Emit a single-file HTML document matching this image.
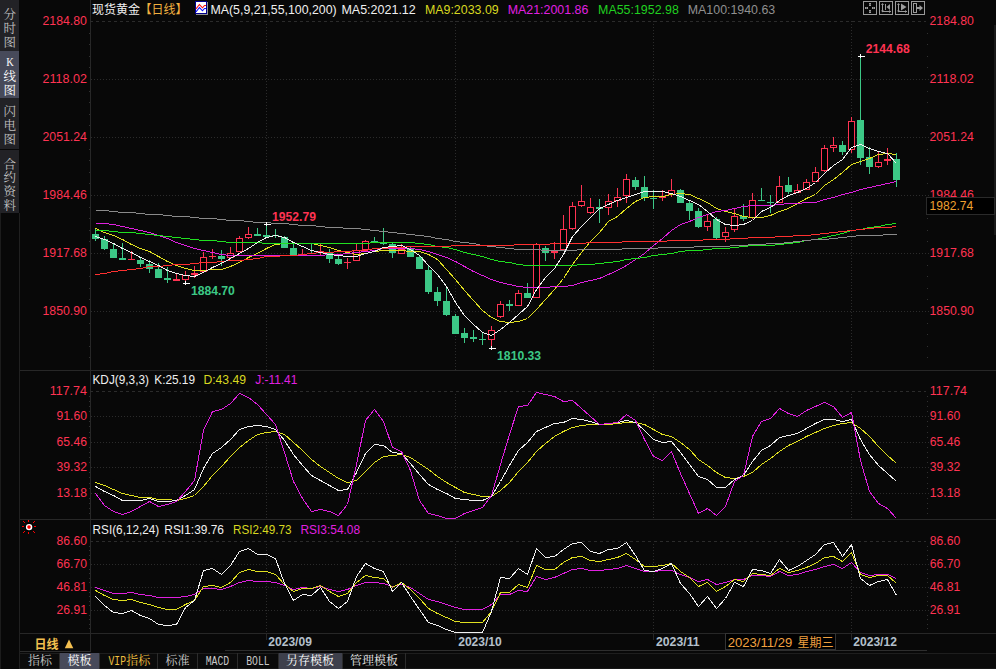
<!DOCTYPE html><html><head><meta charset="utf-8"><title>chart</title><style>html,body{margin:0;padding:0;background:#080808;width:996px;height:669px;overflow:hidden}</style></head><body><svg width="996" height="669" viewBox="0 0 996 669" style="display:block;position:absolute;left:0;top:0">
<rect width="996" height="669" fill="#080808"/>
<g id="sidebar">
<rect x="0" y="0" width="19" height="51" fill="#222226"/>
<text x="9.7" y="18.8" font-family='"Liberation Mono","Noto Serif CJK SC","Noto Sans CJK SC",serif' font-size="12.5" fill="#c0c0c0" text-anchor="middle">分</text>
<text x="9.7" y="32.7" font-family='"Liberation Mono","Noto Serif CJK SC","Noto Sans CJK SC",serif' font-size="12.5" fill="#c0c0c0" text-anchor="middle">时</text>
<text x="9.7" y="46.8" font-family='"Liberation Mono","Noto Serif CJK SC","Noto Sans CJK SC",serif' font-size="12.5" fill="#c0c0c0" text-anchor="middle">图</text>
<rect x="0" y="51" width="19" height="47" fill="#474a5a"/>
<text x="10" y="66.2" font-family='"Liberation Serif",serif' font-size="13" fill="#ffffff" text-anchor="middle" textLength="7.5" lengthAdjust="spacingAndGlyphs">K</text>
<text x="9.7" y="80.5" font-family='"Liberation Mono","Noto Serif CJK SC","Noto Sans CJK SC",serif' font-size="12.5" fill="#ffffff" text-anchor="middle">线</text>
<text x="9.7" y="95.0" font-family='"Liberation Mono","Noto Serif CJK SC","Noto Sans CJK SC",serif' font-size="12.5" fill="#ffffff" text-anchor="middle">图</text>
<rect x="0" y="98" width="19" height="51" fill="#222226"/>
<text x="9.7" y="116.4" font-family='"Liberation Mono","Noto Serif CJK SC","Noto Sans CJK SC",serif' font-size="12.5" fill="#c0c0c0" text-anchor="middle">闪</text>
<text x="9.7" y="130.0" font-family='"Liberation Mono","Noto Serif CJK SC","Noto Sans CJK SC",serif' font-size="12.5" fill="#c0c0c0" text-anchor="middle">电</text>
<text x="9.7" y="143.5" font-family='"Liberation Mono","Noto Serif CJK SC","Noto Sans CJK SC",serif' font-size="12.5" fill="#c0c0c0" text-anchor="middle">图</text>
<rect x="0" y="150" width="19" height="63" fill="#222226"/>
<text x="9.7" y="168.7" font-family='"Liberation Mono","Noto Serif CJK SC","Noto Sans CJK SC",serif' font-size="12.5" fill="#c0c0c0" text-anchor="middle">合</text>
<text x="9.7" y="181.8" font-family='"Liberation Mono","Noto Serif CJK SC","Noto Sans CJK SC",serif' font-size="12.5" fill="#c0c0c0" text-anchor="middle">约</text>
<text x="9.7" y="196.3" font-family='"Liberation Mono","Noto Serif CJK SC","Noto Sans CJK SC",serif' font-size="12.5" fill="#c0c0c0" text-anchor="middle">资</text>
<text x="9.7" y="209.5" font-family='"Liberation Mono","Noto Serif CJK SC","Noto Sans CJK SC",serif' font-size="12.5" fill="#c0c0c0" text-anchor="middle">料</text>
<rect x="0" y="213" width="1" height="456" fill="#1c1c1c"/>
<rect x="19" y="213" width="1" height="456" fill="#202020"/>
</g>
<g id="frame" shape-rendering="crispEdges">
<rect x="90" y="0" width="1" height="652" fill="#272727"/>
<rect x="20" y="370" width="976" height="1" fill="#272727"/>
<rect x="20" y="519" width="976" height="1" fill="#272727"/>
<rect x="20" y="633" width="976" height="1" fill="#272727"/>
<rect x="994" y="25" width="2" height="210" fill="#1a1a1a"/>
<rect x="225" y="650" width="702" height="1" fill="#2e2e2e"/>
</g>
<g id="grid" shape-rendering="crispEdges">
<line x1="90" y1="21.5" x2="926" y2="21.5" stroke="#2b2b2b" stroke-width="1" stroke-dasharray="3 3"/>
<line x1="91" y1="79.5" x2="929" y2="79.5" stroke="#2b2b2b" stroke-width="1" stroke-dasharray="1 2"/>
<line x1="91" y1="137.5" x2="929" y2="137.5" stroke="#2b2b2b" stroke-width="1" stroke-dasharray="1 2"/>
<line x1="91" y1="195.5" x2="929" y2="195.5" stroke="#2b2b2b" stroke-width="1" stroke-dasharray="1 2"/>
<line x1="91" y1="253.5" x2="929" y2="253.5" stroke="#2b2b2b" stroke-width="1" stroke-dasharray="1 2"/>
<line x1="91" y1="311.5" x2="929" y2="311.5" stroke="#2b2b2b" stroke-width="1" stroke-dasharray="1 2"/>
<line x1="90" y1="391.5" x2="926" y2="391.5" stroke="#2b2b2b" stroke-width="1" stroke-dasharray="3 3"/>
<line x1="91" y1="416.5" x2="929" y2="416.5" stroke="#2b2b2b" stroke-width="1" stroke-dasharray="1 2"/>
<line x1="91" y1="442.5" x2="929" y2="442.5" stroke="#2b2b2b" stroke-width="1" stroke-dasharray="1 2"/>
<line x1="91" y1="467.5" x2="929" y2="467.5" stroke="#2b2b2b" stroke-width="1" stroke-dasharray="1 2"/>
<line x1="91" y1="493.5" x2="929" y2="493.5" stroke="#2b2b2b" stroke-width="1" stroke-dasharray="1 2"/>
<line x1="90" y1="541.5" x2="926" y2="541.5" stroke="#2b2b2b" stroke-width="1" stroke-dasharray="3 3"/>
<line x1="91" y1="564.5" x2="929" y2="564.5" stroke="#2b2b2b" stroke-width="1" stroke-dasharray="1 2"/>
<line x1="91" y1="587.5" x2="929" y2="587.5" stroke="#2b2b2b" stroke-width="1" stroke-dasharray="1 2"/>
<line x1="91" y1="610.5" x2="929" y2="610.5" stroke="#2b2b2b" stroke-width="1" stroke-dasharray="1 2"/>
<line x1="266.5" y1="21" x2="266.5" y2="370" stroke="#2b2b2b" stroke-width="1" stroke-dasharray="1 2"/>
<line x1="266.5" y1="394" x2="266.5" y2="519" stroke="#2b2b2b" stroke-width="1" stroke-dasharray="1 2"/>
<line x1="266.5" y1="544" x2="266.5" y2="633" stroke="#2b2b2b" stroke-width="1" stroke-dasharray="1 2"/>
<rect x="266" y="634" width="1" height="6" fill="#272727"/>
<line x1="455.5" y1="21" x2="455.5" y2="370" stroke="#2b2b2b" stroke-width="1" stroke-dasharray="1 2"/>
<line x1="455.5" y1="394" x2="455.5" y2="519" stroke="#2b2b2b" stroke-width="1" stroke-dasharray="1 2"/>
<line x1="455.5" y1="544" x2="455.5" y2="633" stroke="#2b2b2b" stroke-width="1" stroke-dasharray="1 2"/>
<rect x="455" y="634" width="1" height="6" fill="#272727"/>
<line x1="653.5" y1="21" x2="653.5" y2="370" stroke="#2b2b2b" stroke-width="1" stroke-dasharray="1 2"/>
<line x1="653.5" y1="394" x2="653.5" y2="519" stroke="#2b2b2b" stroke-width="1" stroke-dasharray="1 2"/>
<line x1="653.5" y1="544" x2="653.5" y2="633" stroke="#2b2b2b" stroke-width="1" stroke-dasharray="1 2"/>
<rect x="653" y="634" width="1" height="6" fill="#272727"/>
<line x1="851.5" y1="21" x2="851.5" y2="370" stroke="#2b2b2b" stroke-width="1" stroke-dasharray="1 2"/>
<line x1="851.5" y1="394" x2="851.5" y2="519" stroke="#2b2b2b" stroke-width="1" stroke-dasharray="1 2"/>
<line x1="851.5" y1="544" x2="851.5" y2="633" stroke="#2b2b2b" stroke-width="1" stroke-dasharray="1 2"/>
<rect x="851" y="634" width="1" height="6" fill="#272727"/>
<rect x="927" y="33" width="1" height="1" fill="#303030"/><rect x="89" y="33" width="1" height="1" fill="#303030"/>
<rect x="927" y="44" width="1" height="1" fill="#303030"/><rect x="89" y="44" width="1" height="1" fill="#303030"/>
<rect x="927" y="56" width="1" height="1" fill="#303030"/><rect x="89" y="56" width="1" height="1" fill="#303030"/>
<rect x="927" y="67" width="1" height="1" fill="#303030"/><rect x="89" y="67" width="1" height="1" fill="#303030"/>
<rect x="927" y="91" width="1" height="1" fill="#303030"/><rect x="89" y="91" width="1" height="1" fill="#303030"/>
<rect x="927" y="102" width="1" height="1" fill="#303030"/><rect x="89" y="102" width="1" height="1" fill="#303030"/>
<rect x="927" y="114" width="1" height="1" fill="#303030"/><rect x="89" y="114" width="1" height="1" fill="#303030"/>
<rect x="927" y="125" width="1" height="1" fill="#303030"/><rect x="89" y="125" width="1" height="1" fill="#303030"/>
<rect x="927" y="149" width="1" height="1" fill="#303030"/><rect x="89" y="149" width="1" height="1" fill="#303030"/>
<rect x="927" y="160" width="1" height="1" fill="#303030"/><rect x="89" y="160" width="1" height="1" fill="#303030"/>
<rect x="927" y="172" width="1" height="1" fill="#303030"/><rect x="89" y="172" width="1" height="1" fill="#303030"/>
<rect x="927" y="183" width="1" height="1" fill="#303030"/><rect x="89" y="183" width="1" height="1" fill="#303030"/>
<rect x="927" y="207" width="1" height="1" fill="#303030"/><rect x="89" y="207" width="1" height="1" fill="#303030"/>
<rect x="927" y="218" width="1" height="1" fill="#303030"/><rect x="89" y="218" width="1" height="1" fill="#303030"/>
<rect x="927" y="230" width="1" height="1" fill="#303030"/><rect x="89" y="230" width="1" height="1" fill="#303030"/>
<rect x="927" y="241" width="1" height="1" fill="#303030"/><rect x="89" y="241" width="1" height="1" fill="#303030"/>
<rect x="927" y="265" width="1" height="1" fill="#303030"/><rect x="89" y="265" width="1" height="1" fill="#303030"/>
<rect x="927" y="276" width="1" height="1" fill="#303030"/><rect x="89" y="276" width="1" height="1" fill="#303030"/>
<rect x="927" y="288" width="1" height="1" fill="#303030"/><rect x="89" y="288" width="1" height="1" fill="#303030"/>
<rect x="927" y="299" width="1" height="1" fill="#303030"/><rect x="89" y="299" width="1" height="1" fill="#303030"/>
<rect x="927" y="323" width="1" height="1" fill="#303030"/><rect x="89" y="323" width="1" height="1" fill="#303030"/>
<rect x="927" y="334" width="1" height="1" fill="#303030"/><rect x="89" y="334" width="1" height="1" fill="#303030"/>
<rect x="927" y="346" width="1" height="1" fill="#303030"/><rect x="89" y="346" width="1" height="1" fill="#303030"/>
<rect x="927" y="357" width="1" height="1" fill="#303030"/><rect x="89" y="357" width="1" height="1" fill="#303030"/>
<rect x="927" y="396" width="1" height="1" fill="#303030"/><rect x="89" y="396" width="1" height="1" fill="#303030"/>
<rect x="927" y="401" width="1" height="1" fill="#303030"/><rect x="89" y="401" width="1" height="1" fill="#303030"/>
<rect x="927" y="406" width="1" height="1" fill="#303030"/><rect x="89" y="406" width="1" height="1" fill="#303030"/>
<rect x="927" y="411" width="1" height="1" fill="#303030"/><rect x="89" y="411" width="1" height="1" fill="#303030"/>
<rect x="927" y="421" width="1" height="1" fill="#303030"/><rect x="89" y="421" width="1" height="1" fill="#303030"/>
<rect x="927" y="426" width="1" height="1" fill="#303030"/><rect x="89" y="426" width="1" height="1" fill="#303030"/>
<rect x="927" y="432" width="1" height="1" fill="#303030"/><rect x="89" y="432" width="1" height="1" fill="#303030"/>
<rect x="927" y="437" width="1" height="1" fill="#303030"/><rect x="89" y="437" width="1" height="1" fill="#303030"/>
<rect x="927" y="447" width="1" height="1" fill="#303030"/><rect x="89" y="447" width="1" height="1" fill="#303030"/>
<rect x="927" y="452" width="1" height="1" fill="#303030"/><rect x="89" y="452" width="1" height="1" fill="#303030"/>
<rect x="927" y="457" width="1" height="1" fill="#303030"/><rect x="89" y="457" width="1" height="1" fill="#303030"/>
<rect x="927" y="462" width="1" height="1" fill="#303030"/><rect x="89" y="462" width="1" height="1" fill="#303030"/>
<rect x="927" y="472" width="1" height="1" fill="#303030"/><rect x="89" y="472" width="1" height="1" fill="#303030"/>
<rect x="927" y="477" width="1" height="1" fill="#303030"/><rect x="89" y="477" width="1" height="1" fill="#303030"/>
<rect x="927" y="483" width="1" height="1" fill="#303030"/><rect x="89" y="483" width="1" height="1" fill="#303030"/>
<rect x="927" y="488" width="1" height="1" fill="#303030"/><rect x="89" y="488" width="1" height="1" fill="#303030"/>
<rect x="927" y="498" width="1" height="1" fill="#303030"/><rect x="89" y="498" width="1" height="1" fill="#303030"/>
<rect x="927" y="503" width="1" height="1" fill="#303030"/><rect x="89" y="503" width="1" height="1" fill="#303030"/>
<rect x="927" y="508" width="1" height="1" fill="#303030"/><rect x="89" y="508" width="1" height="1" fill="#303030"/>
<rect x="927" y="513" width="1" height="1" fill="#303030"/><rect x="89" y="513" width="1" height="1" fill="#303030"/>
<rect x="927" y="546" width="1" height="1" fill="#303030"/><rect x="89" y="546" width="1" height="1" fill="#303030"/>
<rect x="927" y="550" width="1" height="1" fill="#303030"/><rect x="89" y="550" width="1" height="1" fill="#303030"/>
<rect x="927" y="555" width="1" height="1" fill="#303030"/><rect x="89" y="555" width="1" height="1" fill="#303030"/>
<rect x="927" y="559" width="1" height="1" fill="#303030"/><rect x="89" y="559" width="1" height="1" fill="#303030"/>
<rect x="927" y="569" width="1" height="1" fill="#303030"/><rect x="89" y="569" width="1" height="1" fill="#303030"/>
<rect x="927" y="573" width="1" height="1" fill="#303030"/><rect x="89" y="573" width="1" height="1" fill="#303030"/>
<rect x="927" y="578" width="1" height="1" fill="#303030"/><rect x="89" y="578" width="1" height="1" fill="#303030"/>
<rect x="927" y="582" width="1" height="1" fill="#303030"/><rect x="89" y="582" width="1" height="1" fill="#303030"/>
<rect x="927" y="592" width="1" height="1" fill="#303030"/><rect x="89" y="592" width="1" height="1" fill="#303030"/>
<rect x="927" y="596" width="1" height="1" fill="#303030"/><rect x="89" y="596" width="1" height="1" fill="#303030"/>
<rect x="927" y="601" width="1" height="1" fill="#303030"/><rect x="89" y="601" width="1" height="1" fill="#303030"/>
<rect x="927" y="605" width="1" height="1" fill="#303030"/><rect x="89" y="605" width="1" height="1" fill="#303030"/>
<rect x="927" y="615" width="1" height="1" fill="#303030"/><rect x="89" y="615" width="1" height="1" fill="#303030"/>
<rect x="927" y="619" width="1" height="1" fill="#303030"/><rect x="89" y="619" width="1" height="1" fill="#303030"/>
<rect x="927" y="624" width="1" height="1" fill="#303030"/><rect x="89" y="624" width="1" height="1" fill="#303030"/>
<rect x="927" y="628" width="1" height="1" fill="#303030"/><rect x="89" y="628" width="1" height="1" fill="#303030"/>
</g>
<g id="candles" shape-rendering="crispEdges">
<rect x="95" y="229" width="1" height="12" fill="#3cc886"/>
<rect x="92" y="234" width="7" height="5" fill="#3cc886"/>
<rect x="104" y="236" width="1" height="14" fill="#3cc886"/>
<rect x="101" y="239" width="7" height="10" fill="#3cc886"/>
<rect x="113" y="243" width="1" height="15" fill="#3cc886"/>
<rect x="110" y="249" width="7" height="9" fill="#3cc886"/>
<rect x="122" y="243" width="1" height="17" fill="#3cc886"/>
<rect x="119" y="258" width="7" height="2" fill="#3cc886"/>
<rect x="131" y="251" width="1" height="9" fill="#ff3352"/>
<rect x="128" y="259" width="7" height="1" fill="#ff3352"/>
<rect x="140" y="257" width="1" height="10" fill="#3cc886"/>
<rect x="137" y="260" width="7" height="4" fill="#3cc886"/>
<rect x="149" y="260" width="1" height="13" fill="#3cc886"/>
<rect x="146" y="264" width="7" height="5" fill="#3cc886"/>
<rect x="158" y="263" width="1" height="15" fill="#3cc886"/>
<rect x="155" y="269" width="7" height="9" fill="#3cc886"/>
<rect x="167" y="267" width="1" height="16" fill="#3cc886"/>
<rect x="164" y="278" width="7" height="2" fill="#3cc886"/>
<rect x="176" y="273" width="1" height="8" fill="#ff3352"/>
<rect x="173" y="279" width="7" height="2" fill="#ff3352"/>
<rect x="185" y="271" width="1" height="13" fill="#ff3352"/>
<rect x="182.5" y="275.5" width="6" height="4" fill="#000" stroke="#ff3352" stroke-width="1"/>
<rect x="194" y="266" width="1" height="12" fill="#ff3352"/>
<rect x="191" y="273" width="7" height="2" fill="#ff3352"/>
<rect x="203" y="252" width="1" height="21" fill="#ff3352"/>
<rect x="200.5" y="257.5" width="6" height="14" fill="#000" stroke="#ff3352" stroke-width="1"/>
<rect x="212" y="249" width="1" height="10" fill="#ff3352"/>
<rect x="209" y="256" width="7" height="1" fill="#ff3352"/>
<rect x="221" y="250" width="1" height="16" fill="#3cc886"/>
<rect x="218" y="256" width="7" height="3" fill="#3cc886"/>
<rect x="230" y="247" width="1" height="11" fill="#ff3352"/>
<rect x="227.5" y="253.5" width="6" height="4" fill="#000" stroke="#ff3352" stroke-width="1"/>
<rect x="239" y="236" width="1" height="16" fill="#ff3352"/>
<rect x="236.5" y="238.5" width="6" height="13" fill="#000" stroke="#ff3352" stroke-width="1"/>
<rect x="248" y="227" width="1" height="12" fill="#ff3352"/>
<rect x="245.5" y="234.5" width="6" height="3" fill="#000" stroke="#ff3352" stroke-width="1"/>
<rect x="257" y="228" width="1" height="8" fill="#3cc886"/>
<rect x="254" y="234" width="7" height="2" fill="#3cc886"/>
<rect x="266" y="223" width="1" height="15" fill="#3cc886"/>
<rect x="263" y="235" width="7" height="2" fill="#3cc886"/>
<rect x="275" y="229" width="1" height="9" fill="#3cc886"/>
<rect x="272" y="235" width="7" height="1" fill="#3cc886"/>
<rect x="284" y="236" width="1" height="12" fill="#3cc886"/>
<rect x="281" y="237" width="7" height="11" fill="#3cc886"/>
<rect x="293" y="244" width="1" height="11" fill="#3cc886"/>
<rect x="290" y="248" width="7" height="7" fill="#3cc886"/>
<rect x="302" y="249" width="1" height="7" fill="#ff3352"/>
<rect x="299" y="254" width="7" height="2" fill="#ff3352"/>
<rect x="311" y="244" width="1" height="10" fill="#3cc886"/>
<rect x="308" y="253" width="7" height="1" fill="#3cc886"/>
<rect x="320" y="244" width="1" height="11" fill="#ff3352"/>
<rect x="317" y="251" width="7" height="2" fill="#ff3352"/>
<rect x="329" y="249" width="1" height="14" fill="#3cc886"/>
<rect x="326" y="252" width="7" height="7" fill="#3cc886"/>
<rect x="338" y="256" width="1" height="9" fill="#3cc886"/>
<rect x="335" y="259" width="7" height="5" fill="#3cc886"/>
<rect x="347" y="258" width="1" height="11" fill="#ff3352"/>
<rect x="344" y="262" width="7" height="1" fill="#ff3352"/>
<rect x="356" y="244" width="1" height="17" fill="#ff3352"/>
<rect x="353.5" y="250.5" width="6" height="10" fill="#000" stroke="#ff3352" stroke-width="1"/>
<rect x="365" y="240" width="1" height="10" fill="#ff3352"/>
<rect x="362.5" y="241.5" width="6" height="8" fill="#000" stroke="#ff3352" stroke-width="1"/>
<rect x="374" y="237" width="1" height="6" fill="#3cc886"/>
<rect x="371" y="241" width="7" height="2" fill="#3cc886"/>
<rect x="383" y="228" width="1" height="17" fill="#3cc886"/>
<rect x="380" y="242" width="7" height="2" fill="#3cc886"/>
<rect x="392" y="243" width="1" height="15" fill="#3cc886"/>
<rect x="389" y="244" width="7" height="9" fill="#3cc886"/>
<rect x="401" y="244" width="1" height="10" fill="#ff3352"/>
<rect x="398.5" y="249.5" width="6" height="4" fill="#000" stroke="#ff3352" stroke-width="1"/>
<rect x="410" y="246" width="1" height="11" fill="#3cc886"/>
<rect x="407" y="249" width="7" height="8" fill="#3cc886"/>
<rect x="419" y="255" width="1" height="14" fill="#3cc886"/>
<rect x="416" y="257" width="7" height="12" fill="#3cc886"/>
<rect x="428" y="266" width="1" height="28" fill="#3cc886"/>
<rect x="425" y="270" width="7" height="22" fill="#3cc886"/>
<rect x="437" y="287" width="1" height="19" fill="#3cc886"/>
<rect x="434" y="292" width="7" height="9" fill="#3cc886"/>
<rect x="446" y="287" width="1" height="29" fill="#3cc886"/>
<rect x="443" y="301" width="7" height="14" fill="#3cc886"/>
<rect x="455" y="314" width="1" height="20" fill="#3cc886"/>
<rect x="452" y="316" width="7" height="18" fill="#3cc886"/>
<rect x="464" y="328" width="1" height="15" fill="#3cc886"/>
<rect x="461" y="333" width="7" height="5" fill="#3cc886"/>
<rect x="473" y="330" width="1" height="12" fill="#3cc886"/>
<rect x="470" y="337" width="7" height="2" fill="#3cc886"/>
<rect x="482" y="333" width="1" height="12" fill="#3cc886"/>
<rect x="479" y="339" width="7" height="1" fill="#3cc886"/>
<rect x="491" y="326" width="1" height="22" fill="#ff3352"/>
<rect x="488.5" y="330.5" width="6" height="9" fill="#000" stroke="#ff3352" stroke-width="1"/>
<rect x="500" y="301" width="1" height="17" fill="#ff3352"/>
<rect x="497.5" y="304.5" width="6" height="12" fill="#000" stroke="#ff3352" stroke-width="1"/>
<rect x="509" y="300" width="1" height="11" fill="#3cc886"/>
<rect x="506" y="304" width="7" height="2" fill="#3cc886"/>
<rect x="518" y="290" width="1" height="16" fill="#ff3352"/>
<rect x="515.5" y="293.5" width="6" height="12" fill="#000" stroke="#ff3352" stroke-width="1"/>
<rect x="527" y="283" width="1" height="15" fill="#3cc886"/>
<rect x="524" y="293" width="7" height="5" fill="#3cc886"/>
<rect x="536" y="243" width="1" height="55" fill="#ff3352"/>
<rect x="533.5" y="244.5" width="6" height="53" fill="#000" stroke="#ff3352" stroke-width="1"/>
<rect x="545" y="246" width="1" height="15" fill="#3cc886"/>
<rect x="542" y="248" width="7" height="5" fill="#3cc886"/>
<rect x="554" y="242" width="1" height="17" fill="#ff3352"/>
<rect x="551" y="251" width="7" height="2" fill="#ff3352"/>
<rect x="563" y="215" width="1" height="35" fill="#ff3352"/>
<rect x="560.5" y="229.5" width="6" height="20" fill="#000" stroke="#ff3352" stroke-width="1"/>
<rect x="572" y="202" width="1" height="28" fill="#ff3352"/>
<rect x="569.5" y="206.5" width="6" height="22" fill="#000" stroke="#ff3352" stroke-width="1"/>
<rect x="581" y="185" width="1" height="22" fill="#ff3352"/>
<rect x="578.5" y="201.5" width="6" height="4" fill="#000" stroke="#ff3352" stroke-width="1"/>
<rect x="590" y="198" width="1" height="16" fill="#ff3352"/>
<rect x="587.5" y="207.5" width="6" height="5" fill="#000" stroke="#ff3352" stroke-width="1"/>
<rect x="599" y="199" width="1" height="24" fill="#3cc886"/>
<rect x="596" y="207" width="7" height="2" fill="#3cc886"/>
<rect x="608" y="194" width="1" height="21" fill="#ff3352"/>
<rect x="605.5" y="201.5" width="6" height="6" fill="#000" stroke="#ff3352" stroke-width="1"/>
<rect x="617" y="188" width="1" height="19" fill="#ff3352"/>
<rect x="614.5" y="197.5" width="6" height="3" fill="#000" stroke="#ff3352" stroke-width="1"/>
<rect x="626" y="174" width="1" height="29" fill="#ff3352"/>
<rect x="623.5" y="179.5" width="6" height="16" fill="#000" stroke="#ff3352" stroke-width="1"/>
<rect x="635" y="177" width="1" height="13" fill="#3cc886"/>
<rect x="632" y="180" width="7" height="7" fill="#3cc886"/>
<rect x="644" y="176" width="1" height="25" fill="#3cc886"/>
<rect x="641" y="187" width="7" height="11" fill="#3cc886"/>
<rect x="653" y="190" width="1" height="19" fill="#3cc886"/>
<rect x="650" y="198" width="7" height="1" fill="#3cc886"/>
<rect x="662" y="190" width="1" height="11" fill="#ff3352"/>
<rect x="659" y="196" width="7" height="2" fill="#ff3352"/>
<rect x="671" y="179" width="1" height="18" fill="#ff3352"/>
<rect x="668.5" y="190.5" width="6" height="4" fill="#000" stroke="#ff3352" stroke-width="1"/>
<rect x="680" y="189" width="1" height="14" fill="#3cc886"/>
<rect x="677" y="190" width="7" height="13" fill="#3cc886"/>
<rect x="689" y="201" width="1" height="19" fill="#3cc886"/>
<rect x="686" y="203" width="7" height="8" fill="#3cc886"/>
<rect x="698" y="208" width="1" height="20" fill="#3cc886"/>
<rect x="695" y="211" width="7" height="16" fill="#3cc886"/>
<rect x="707" y="215" width="1" height="16" fill="#ff3352"/>
<rect x="704.5" y="221.5" width="6" height="5" fill="#000" stroke="#ff3352" stroke-width="1"/>
<rect x="716" y="217" width="1" height="23" fill="#3cc886"/>
<rect x="713" y="219" width="7" height="19" fill="#3cc886"/>
<rect x="725" y="227" width="1" height="15" fill="#ff3352"/>
<rect x="722.5" y="232.5" width="6" height="4" fill="#000" stroke="#ff3352" stroke-width="1"/>
<rect x="734" y="208" width="1" height="24" fill="#ff3352"/>
<rect x="731.5" y="216.5" width="6" height="13" fill="#000" stroke="#ff3352" stroke-width="1"/>
<rect x="743" y="204" width="1" height="17" fill="#3cc886"/>
<rect x="740" y="216" width="7" height="3" fill="#3cc886"/>
<rect x="752" y="193" width="1" height="26" fill="#ff3352"/>
<rect x="749.5" y="200.5" width="6" height="17" fill="#000" stroke="#ff3352" stroke-width="1"/>
<rect x="761" y="188" width="1" height="13" fill="#3cc886"/>
<rect x="758" y="200" width="7" height="1" fill="#3cc886"/>
<rect x="770" y="195" width="1" height="18" fill="#3cc886"/>
<rect x="767" y="202" width="7" height="1" fill="#3cc886"/>
<rect x="779" y="176" width="1" height="27" fill="#ff3352"/>
<rect x="776.5" y="186.5" width="6" height="16" fill="#000" stroke="#ff3352" stroke-width="1"/>
<rect x="788" y="177" width="1" height="17" fill="#3cc886"/>
<rect x="785" y="185" width="7" height="7" fill="#3cc886"/>
<rect x="797" y="184" width="1" height="9" fill="#ff3352"/>
<rect x="794.5" y="190.5" width="6" height="2" fill="#000" stroke="#ff3352" stroke-width="1"/>
<rect x="806" y="179" width="1" height="11" fill="#ff3352"/>
<rect x="803.5" y="182.5" width="6" height="7" fill="#000" stroke="#ff3352" stroke-width="1"/>
<rect x="815" y="167" width="1" height="15" fill="#ff3352"/>
<rect x="812.5" y="172.5" width="6" height="9" fill="#000" stroke="#ff3352" stroke-width="1"/>
<rect x="824" y="145" width="1" height="27" fill="#ff3352"/>
<rect x="821.5" y="148.5" width="6" height="22" fill="#000" stroke="#ff3352" stroke-width="1"/>
<rect x="833" y="137" width="1" height="15" fill="#ff3352"/>
<rect x="830.5" y="145.5" width="6" height="2" fill="#000" stroke="#ff3352" stroke-width="1"/>
<rect x="842" y="141" width="1" height="14" fill="#3cc886"/>
<rect x="839" y="145" width="7" height="7" fill="#3cc886"/>
<rect x="851" y="117" width="1" height="36" fill="#ff3352"/>
<rect x="848.5" y="121.5" width="6" height="28" fill="#000" stroke="#ff3352" stroke-width="1"/>
<rect x="860" y="56" width="1" height="109" fill="#3cc886"/>
<rect x="857" y="120" width="7" height="38" fill="#3cc886"/>
<rect x="869" y="147" width="1" height="27" fill="#3cc886"/>
<rect x="866" y="157" width="7" height="10" fill="#3cc886"/>
<rect x="878" y="152" width="1" height="16" fill="#ff3352"/>
<rect x="875.5" y="162.5" width="6" height="4" fill="#000" stroke="#ff3352" stroke-width="1"/>
<rect x="887" y="148" width="1" height="17" fill="#ff3352"/>
<rect x="884" y="159" width="7" height="2" fill="#ff3352"/>
<rect x="896" y="153" width="1" height="34" fill="#3cc886"/>
<rect x="893" y="159" width="7" height="21" fill="#3cc886"/>
</g>
<g id="ma">
<polyline points="95.5,228.5 104.5,232.5 113.5,235.5 122.5,239.5 131.5,244.5 140.5,248.5 149.5,251.5 158.5,256.5 167.5,261.5 176.5,265.5 185.5,268.5 194.5,270.5 203.5,270.5 212.5,269.5 221.5,269.5 230.5,266.5 239.5,262.5 248.5,257.5 257.5,253.5 266.5,248.5 275.5,244.5 284.5,243.5 293.5,243.5 302.5,243.5 311.5,243.5 320.5,245.5 329.5,247.5 338.5,250.5 347.5,252.5 356.5,254.5 365.5,253.5 374.5,251.5 383.5,250.5 392.5,250.5 401.5,250.5 410.5,251.5 419.5,251.5 428.5,254.5 437.5,259.5 446.5,269.5 455.5,279.5 464.5,290.5 473.5,300.5 482.5,310.5 491.5,317.5 500.5,321.5 509.5,322.5 518.5,321.5 527.5,318.5 536.5,309.5 545.5,299.5 554.5,289.5 563.5,278.5 572.5,264.5 581.5,252.5 590.5,241.5 599.5,232.5 608.5,221.5 617.5,216.5 626.5,208.5 635.5,201.5 644.5,197.5 653.5,196.5 662.5,196.5 671.5,194.5 680.5,193.5 689.5,194.5 698.5,198.5 707.5,202.5 716.5,208.5 725.5,211.5 734.5,213.5 743.5,216.5 752.5,217.5 761.5,217.5 770.5,215.5 779.5,211.5 788.5,208.5 806.5,198.5 815.5,194.5 824.5,185.5 833.5,179.5 842.5,172.5 851.5,164.5 860.5,161.5 869.5,158.5 878.5,154.5 887.5,153.5 896.5,154.5" fill="none" stroke="#e0e020" stroke-width="1" stroke-linejoin="round" shape-rendering="crispEdges"/>
<polyline points="95.5,223.5 104.5,223.5 113.5,224.5 122.5,226.5 131.5,228.5 140.5,230.5 149.5,232.5 158.5,235.5 167.5,238.5 176.5,242.5 185.5,245.5 194.5,248.5 203.5,250.5 212.5,252.5 221.5,254.5 230.5,255.5 239.5,255.5 248.5,255.5 257.5,255.5 266.5,255.5 275.5,255.5 284.5,255.5 293.5,255.5 302.5,255.5 311.5,255.5 320.5,255.5 329.5,254.5 338.5,254.5 347.5,253.5 356.5,252.5 365.5,251.5 374.5,250.5 383.5,248.5 392.5,248.5 401.5,248.5 410.5,248.5 419.5,249.5 428.5,251.5 437.5,254.5 446.5,257.5 455.5,261.5 464.5,266.5 473.5,271.5 482.5,275.5 491.5,279.5 500.5,282.5 509.5,284.5 518.5,286.5 527.5,287.5 536.5,287.5 545.5,287.5 554.5,286.5 563.5,286.5 572.5,285.5 581.5,282.5 590.5,280.5 599.5,278.5 608.5,274.5 617.5,270.5 626.5,265.5 635.5,259.5 644.5,253.5 653.5,245.5 662.5,238.5 671.5,230.5 680.5,224.5 689.5,221.5 698.5,217.5 707.5,214.5 716.5,211.5 725.5,210.5 734.5,208.5 743.5,206.5 752.5,205.5 761.5,205.5 770.5,205.5 779.5,204.5 788.5,203.5 797.5,203.5 806.5,202.5 815.5,202.5 824.5,199.5 833.5,197.5 842.5,194.5 851.5,192.5 860.5,189.5 869.5,187.5 878.5,185.5 887.5,183.5 896.5,181.5" fill="none" stroke="#e020e0" stroke-width="1" stroke-linejoin="round" shape-rendering="crispEdges"/>
<polyline points="95.5,230.5 104.5,230.5 113.5,231.5 122.5,232.5 131.5,232.5 140.5,233.5 149.5,234.5 158.5,235.5 167.5,236.5 176.5,237.5 185.5,238.5 194.5,239.5 203.5,240.5 212.5,240.5 221.5,241.5 230.5,242.5 239.5,242.5 248.5,242.5 257.5,242.5 266.5,243.5 275.5,243.5 284.5,243.5 293.5,243.5 302.5,243.5 311.5,243.5 320.5,243.5 329.5,243.5 338.5,243.5 347.5,243.5 356.5,243.5 365.5,243.5 374.5,242.5 383.5,242.5 392.5,242.5 401.5,242.5 410.5,242.5 419.5,243.5 428.5,244.5 437.5,246.5 446.5,247.5 455.5,249.5 464.5,252.5 473.5,254.5 482.5,256.5 491.5,259.5 500.5,261.5 509.5,262.5 518.5,264.5 527.5,265.5 536.5,265.5 545.5,265.5 554.5,265.5 563.5,265.5 572.5,265.5 581.5,264.5 590.5,264.5 599.5,263.5 608.5,262.5 617.5,261.5 626.5,259.5 635.5,258.5 644.5,257.5 653.5,255.5 662.5,254.5 671.5,253.5 680.5,251.5 689.5,250.5 698.5,250.5 707.5,249.5 716.5,248.5 725.5,248.5 734.5,247.5 743.5,246.5 752.5,245.5 761.5,245.5 770.5,245.5 779.5,244.5 788.5,243.5 797.5,242.5 806.5,240.5 815.5,239.5 824.5,237.5 833.5,235.5 842.5,233.5 851.5,230.5 860.5,229.5 869.5,227.5 878.5,226.5 887.5,224.5 896.5,223.5" fill="none" stroke="#20e020" stroke-width="1" stroke-linejoin="round" shape-rendering="crispEdges"/>
<polyline points="95.5,210.5 104.5,210.5 113.5,211.5 122.5,212.5 131.5,212.5 140.5,213.5 149.5,214.5 158.5,214.5 167.5,215.5 176.5,216.5 185.5,216.5 194.5,217.5 203.5,218.5 212.5,218.5 221.5,219.5 230.5,220.5 239.5,220.5 248.5,221.5 257.5,222.5 266.5,222.5 275.5,223.5 284.5,223.5 293.5,224.5 302.5,225.5 311.5,225.5 320.5,226.5 329.5,227.5 338.5,227.5 347.5,228.5 356.5,228.5 365.5,229.5 374.5,230.5 383.5,231.5 392.5,232.5 401.5,233.5 410.5,234.5 419.5,235.5 428.5,236.5 437.5,238.5 446.5,239.5 455.5,241.5 464.5,242.5 473.5,243.5 482.5,245.5 491.5,246.5 500.5,247.5 509.5,248.5 518.5,249.5 527.5,249.5 536.5,249.5 545.5,250.5 554.5,250.5 563.5,250.5 572.5,250.5 581.5,249.5 590.5,249.5 599.5,249.5 608.5,249.5 617.5,249.5 626.5,248.5 635.5,248.5 644.5,248.5 653.5,248.5 662.5,247.5 671.5,247.5 680.5,247.5 689.5,247.5 698.5,246.5 707.5,246.5 716.5,246.5 725.5,246.5 734.5,245.5 743.5,245.5 752.5,244.5 761.5,244.5 770.5,243.5 779.5,243.5 788.5,242.5 797.5,241.5 806.5,240.5 815.5,239.5 824.5,239.5 833.5,238.5 842.5,237.5 851.5,236.5 860.5,235.5 869.5,235.5 878.5,235.5 887.5,234.5 896.5,234.5" fill="none" stroke="#8a8a8a" stroke-width="1" stroke-linejoin="round" shape-rendering="crispEdges"/>
<polyline points="95.5,274.5 104.5,273.5 113.5,271.5 122.5,270.5 131.5,269.5 140.5,268.5 149.5,266.5 158.5,266.5 167.5,265.5 176.5,264.5 185.5,264.5 194.5,263.5 203.5,262.5 212.5,262.5 221.5,261.5 230.5,260.5 239.5,260.5 248.5,259.5 257.5,258.5 266.5,256.5 275.5,256.5 284.5,255.5 293.5,255.5 302.5,254.5 311.5,253.5 320.5,252.5 329.5,252.5 338.5,251.5 347.5,251.5 356.5,250.5 365.5,250.5 374.5,248.5 383.5,248.5 392.5,247.5 401.5,247.5 410.5,246.5 419.5,246.5 428.5,246.5 437.5,246.5 446.5,246.5 455.5,245.5 464.5,245.5 473.5,245.5 482.5,245.5 491.5,245.5 500.5,245.5 509.5,245.5 518.5,244.5 527.5,244.5 536.5,244.5 545.5,244.5 554.5,243.5 563.5,243.5 572.5,243.5 581.5,243.5 590.5,242.5 599.5,242.5 608.5,242.5 617.5,242.5 626.5,241.5 635.5,241.5 644.5,241.5 653.5,241.5 662.5,241.5 671.5,240.5 680.5,240.5 689.5,240.5 698.5,240.5 707.5,239.5 716.5,239.5 725.5,239.5 734.5,238.5 743.5,238.5 752.5,237.5 761.5,237.5 770.5,237.5 779.5,236.5 788.5,236.5 797.5,235.5 806.5,235.5 815.5,234.5 824.5,233.5 833.5,232.5 842.5,231.5 851.5,230.5 860.5,229.5 869.5,228.5 878.5,227.5 887.5,227.5 896.5,226.5" fill="none" stroke="#ff3030" stroke-width="1" stroke-linejoin="round" shape-rendering="crispEdges"/>
<polyline points="95.5,236.5 104.5,239.5 113.5,243.5 122.5,248.5 131.5,252.5 140.5,257.5 149.5,261.5 158.5,265.5 167.5,270.5 176.5,273.5 185.5,275.5 194.5,276.5 203.5,272.5 212.5,267.5 221.5,263.5 230.5,258.5 239.5,253.5 248.5,248.5 257.5,242.5 266.5,237.5 275.5,235.5 284.5,237.5 293.5,242.5 302.5,246.5 311.5,250.5 320.5,252.5 329.5,254.5 338.5,255.5 347.5,256.5 356.5,256.5 365.5,253.5 374.5,251.5 383.5,247.5 392.5,246.5 401.5,245.5 410.5,249.5 419.5,255.5 428.5,265.5 437.5,274.5 446.5,286.5 455.5,302.5 464.5,315.5 473.5,324.5 482.5,332.5 491.5,335.5 500.5,329.5 509.5,322.5 518.5,314.5 527.5,306.5 536.5,289.5 545.5,277.5 554.5,268.5 563.5,254.5 572.5,236.5 581.5,226.5 590.5,217.5 599.5,208.5 608.5,204.5 617.5,200.5 626.5,197.5 635.5,194.5 644.5,191.5 653.5,191.5 662.5,191.5 671.5,193.5 680.5,196.5 689.5,200.5 698.5,204.5 707.5,211.5 716.5,219.5 725.5,224.5 734.5,225.5 743.5,224.5 752.5,220.5 761.5,211.5 770.5,207.5 779.5,200.5 788.5,195.5 797.5,192.5 806.5,188.5 815.5,182.5 824.5,173.5 833.5,165.5 842.5,159.5 851.5,147.5 860.5,144.5 869.5,148.5 878.5,151.5 887.5,153.5 896.5,163.5" fill="none" stroke="#f0f0f0" stroke-width="1" stroke-linejoin="round" shape-rendering="crispEdges"/>
</g>
<g id="kdj">
<polyline points="95.5,482.5 104.5,485.5 113.5,489.5 122.5,493.5 131.5,495.5 140.5,497.5 149.5,497.5 158.5,499.5 167.5,499.5 176.5,500.5 185.5,498.5 194.5,495.5 203.5,486.5 212.5,475.5 221.5,466.5 230.5,456.5 239.5,447.5 248.5,440.5 257.5,434.5 266.5,432.5 275.5,431.5 284.5,434.5 293.5,442.5 302.5,450.5 311.5,459.5 320.5,466.5 329.5,472.5 338.5,478.5 347.5,482.5 356.5,480.5 365.5,471.5 374.5,462.5 383.5,456.5 392.5,455.5 401.5,454.5 410.5,457.5 419.5,463.5 428.5,469.5 437.5,476.5 446.5,482.5 455.5,487.5 464.5,492.5 473.5,494.5 482.5,496.5 491.5,496.5 500.5,490.5 509.5,482.5 518.5,471.5 527.5,462.5 536.5,451.5 545.5,443.5 554.5,436.5 563.5,431.5 572.5,427.5 581.5,425.5 590.5,424.5 599.5,424.5 608.5,424.5 617.5,423.5 626.5,422.5 635.5,422.5 644.5,424.5 653.5,429.5 662.5,434.5 671.5,436.5 680.5,442.5 689.5,449.5 698.5,459.5 707.5,465.5 716.5,472.5 725.5,477.5 734.5,478.5 743.5,476.5 752.5,472.5 761.5,464.5 770.5,458.5 779.5,451.5 788.5,445.5 797.5,441.5 806.5,436.5 815.5,432.5 824.5,428.5 833.5,425.5 842.5,423.5 851.5,422.5 860.5,428.5 869.5,436.5 878.5,446.5 887.5,455.5 896.5,463.5" fill="none" stroke="#e0e020" stroke-width="1" stroke-linejoin="round" shape-rendering="crispEdges"/>
<polyline points="95.5,486.5 104.5,491.5 113.5,495.5 122.5,500.5 131.5,500.5 140.5,500.5 149.5,498.5 158.5,501.5 167.5,501.5 176.5,500.5 185.5,495.5 194.5,489.5 203.5,468.5 212.5,453.5 221.5,447.5 230.5,439.5 239.5,429.5 248.5,426.5 257.5,425.5 266.5,426.5 275.5,429.5 284.5,440.5 293.5,454.5 302.5,465.5 311.5,475.5 320.5,480.5 329.5,485.5 338.5,490.5 347.5,489.5 356.5,472.5 365.5,453.5 374.5,444.5 383.5,445.5 392.5,452.5 401.5,453.5 410.5,463.5 419.5,474.5 428.5,484.5 437.5,489.5 446.5,493.5 455.5,498.5 464.5,499.5 473.5,500.5 482.5,500.5 491.5,496.5 500.5,481.5 509.5,465.5 518.5,450.5 527.5,442.5 536.5,431.5 545.5,427.5 554.5,423.5 563.5,422.5 572.5,418.5 581.5,419.5 590.5,421.5 599.5,424.5 608.5,423.5 617.5,422.5 626.5,420.5 635.5,422.5 644.5,430.5 653.5,439.5 662.5,442.5 671.5,441.5 680.5,452.5 689.5,464.5 698.5,476.5 707.5,479.5 716.5,487.5 725.5,487.5 734.5,479.5 743.5,475.5 752.5,461.5 761.5,450.5 770.5,445.5 779.5,437.5 788.5,435.5 797.5,433.5 806.5,428.5 815.5,423.5 824.5,419.5 833.5,419.5 842.5,421.5 851.5,419.5 860.5,439.5 869.5,454.5 878.5,465.5 887.5,473.5 896.5,481.5" fill="none" stroke="#f0f0f0" stroke-width="1" stroke-linejoin="round" shape-rendering="crispEdges"/>
<polyline points="95.5,493.5 104.5,505.5 113.5,511.5 122.5,514.5 131.5,511.5 140.5,506.5 149.5,501.5 158.5,506.5 167.5,504.5 176.5,501.5 185.5,491.5 194.5,480.5 203.5,430.5 212.5,411.5 221.5,409.5 230.5,403.5 239.5,393.5 248.5,397.5 257.5,404.5 266.5,414.5 275.5,424.5 284.5,452.5 293.5,481.5 302.5,498.5 311.5,511.5 320.5,509.5 329.5,511.5 338.5,515.5 347.5,504.5 356.5,464.5 365.5,420.5 374.5,409.5 383.5,421.5 392.5,447.5 401.5,451.5 410.5,470.5 419.5,500.5 428.5,513.5 437.5,515.5 446.5,518.5 455.5,518.5 464.5,513.5 473.5,510.5 482.5,507.5 491.5,495.5 500.5,464.5 509.5,434.5 518.5,406.5 527.5,405.5 536.5,392.5 545.5,394.5 554.5,396.5 563.5,401.5 572.5,400.5 581.5,408.5 590.5,416.5 599.5,424.5 608.5,423.5 617.5,422.5 626.5,414.5 635.5,420.5 644.5,439.5 653.5,456.5 662.5,460.5 671.5,451.5 680.5,473.5 689.5,493.5 698.5,513.5 707.5,508.5 716.5,515.5 725.5,506.5 734.5,481.5 743.5,475.5 752.5,436.5 761.5,421.5 770.5,418.5 779.5,408.5 788.5,413.5 797.5,416.5 806.5,410.5 815.5,406.5 824.5,402.5 833.5,406.5 842.5,417.5 851.5,412.5 860.5,460.5 869.5,491.5 878.5,503.5 887.5,508.5 896.5,518.5" fill="none" stroke="#e020e0" stroke-width="1" stroke-linejoin="round" shape-rendering="crispEdges"/>
</g>
<g id="rsi">
<polyline points="95.5,587.5 104.5,590.5 113.5,593.5 122.5,593.5 131.5,592.5 140.5,594.5 149.5,595.5 158.5,597.5 167.5,597.5 176.5,597.5 185.5,596.5 194.5,594.5 203.5,588.5 212.5,588.5 221.5,589.5 230.5,586.5 239.5,582.5 248.5,580.5 257.5,581.5 266.5,581.5 275.5,582.5 284.5,585.5 293.5,589.5 302.5,587.5 311.5,588.5 320.5,586.5 329.5,589.5 338.5,591.5 347.5,589.5 356.5,585.5 365.5,582.5 374.5,582.5 383.5,583.5 392.5,586.5 401.5,584.5 410.5,587.5 419.5,593.5 428.5,599.5 437.5,601.5 446.5,604.5 455.5,607.5 464.5,609.5 473.5,609.5 482.5,609.5 491.5,604.5 500.5,594.5 509.5,594.5 518.5,590.5 527.5,591.5 536.5,576.5 545.5,579.5 554.5,577.5 563.5,573.5 572.5,569.5 581.5,568.5 590.5,570.5 599.5,570.5 608.5,569.5 617.5,568.5 626.5,565.5 635.5,568.5 644.5,571.5 653.5,571.5 662.5,570.5 671.5,570.5 680.5,574.5 689.5,577.5 698.5,581.5 707.5,579.5 716.5,584.5 725.5,582.5 734.5,579.5 743.5,579.5 752.5,575.5 761.5,575.5 770.5,576.5 779.5,571.5 788.5,575.5 797.5,574.5 806.5,571.5 815.5,569.5 824.5,566.5 833.5,564.5 842.5,568.5 851.5,562.5 860.5,572.5 869.5,575.5 878.5,574.5 887.5,574.5 896.5,578.5" fill="none" stroke="#e020e0" stroke-width="1" stroke-linejoin="round" shape-rendering="crispEdges"/>
<polyline points="95.5,590.5 104.5,595.5 113.5,599.5 122.5,600.5 131.5,599.5 140.5,602.5 149.5,604.5 158.5,607.5 167.5,609.5 176.5,609.5 185.5,604.5 194.5,600.5 203.5,586.5 212.5,585.5 221.5,587.5 230.5,582.5 239.5,572.5 248.5,569.5 257.5,571.5 266.5,571.5 275.5,574.5 284.5,584.5 293.5,591.5 302.5,588.5 311.5,588.5 320.5,585.5 329.5,591.5 338.5,596.5 347.5,593.5 356.5,582.5 365.5,575.5 374.5,577.5 383.5,578.5 392.5,587.5 401.5,582.5 410.5,589.5 419.5,598.5 428.5,608.5 437.5,613.5 446.5,617.5 455.5,621.5 464.5,622.5 473.5,622.5 482.5,622.5 491.5,611.5 500.5,592.5 509.5,592.5 518.5,584.5 527.5,587.5 536.5,565.5 545.5,569.5 554.5,569.5 563.5,562.5 572.5,557.5 581.5,556.5 590.5,560.5 599.5,561.5 608.5,559.5 617.5,557.5 626.5,553.5 635.5,559.5 644.5,566.5 653.5,566.5 662.5,565.5 671.5,563.5 680.5,571.5 689.5,577.5 698.5,586.5 707.5,582.5 716.5,591.5 725.5,586.5 734.5,579.5 743.5,581.5 752.5,573.5 761.5,574.5 770.5,575.5 779.5,568.5 788.5,572.5 797.5,570.5 806.5,567.5 815.5,563.5 824.5,557.5 833.5,556.5 842.5,561.5 851.5,552.5 860.5,574.5 869.5,577.5 878.5,575.5 887.5,575.5 896.5,583.5" fill="none" stroke="#e0e020" stroke-width="1" stroke-linejoin="round" shape-rendering="crispEdges"/>
<polyline points="95.5,596.5 104.5,605.5 113.5,612.5 122.5,613.5 131.5,610.5 140.5,615.5 149.5,618.5 158.5,624.5 167.5,625.5 176.5,624.5 185.5,607.5 194.5,600.5 203.5,570.5 212.5,568.5 221.5,574.5 230.5,565.5 239.5,551.5 248.5,548.5 257.5,554.5 266.5,554.5 275.5,558.5 284.5,583.5 293.5,600.5 302.5,594.5 311.5,595.5 320.5,587.5 329.5,601.5 338.5,608.5 347.5,601.5 356.5,576.5 365.5,563.5 374.5,568.5 383.5,571.5 392.5,591.5 401.5,582.5 410.5,596.5 419.5,609.5 428.5,622.5 437.5,625.5 446.5,629.5 455.5,632.5 464.5,632.5 473.5,632.5 482.5,632.5 491.5,611.5 500.5,577.5 509.5,578.5 518.5,568.5 527.5,574.5 536.5,548.5 545.5,557.5 554.5,556.5 563.5,549.5 572.5,543.5 581.5,542.5 590.5,551.5 599.5,553.5 608.5,549.5 617.5,548.5 626.5,542.5 635.5,555.5 644.5,570.5 653.5,571.5 662.5,568.5 671.5,563.5 680.5,583.5 689.5,593.5 698.5,606.5 707.5,596.5 716.5,608.5 725.5,598.5 734.5,582.5 743.5,586.5 752.5,569.5 761.5,570.5 770.5,573.5 779.5,559.5 788.5,570.5 797.5,566.5 806.5,560.5 815.5,554.5 824.5,544.5 833.5,542.5 842.5,556.5 851.5,544.5 860.5,578.5 869.5,585.5 878.5,581.5 887.5,579.5 896.5,595.5" fill="none" stroke="#f0f0f0" stroke-width="1" stroke-linejoin="round" shape-rendering="crispEdges"/>
</g>
<rect x="264" y="224" width="7" height="1" fill="#fff" shape-rendering="crispEdges"/><rect x="266" y="222" width="1" height="4" fill="#fff" shape-rendering="crispEdges"/>
<rect x="183" y="283" width="7" height="1" fill="#fff" shape-rendering="crispEdges"/><rect x="185" y="281" width="1" height="4" fill="#fff" shape-rendering="crispEdges"/>
<rect x="489" y="348" width="7" height="1" fill="#fff" shape-rendering="crispEdges"/><rect x="491" y="346" width="1" height="4" fill="#fff" shape-rendering="crispEdges"/>
<rect x="858" y="56" width="7" height="1" fill="#fff" shape-rendering="crispEdges"/><rect x="860" y="54" width="1" height="4" fill="#fff" shape-rendering="crispEdges"/>
<text x="272" y="220.5" font-family='"Liberation Sans","Noto Sans CJK SC",sans-serif' font-size="12" fill="#ff3352" text-anchor="start" font-weight="bold" textLength="44" lengthAdjust="spacingAndGlyphs">1952.79</text>
<text x="190.9" y="295" font-family='"Liberation Sans","Noto Sans CJK SC",sans-serif' font-size="12" fill="#3cc886" text-anchor="start" font-weight="bold" textLength="44" lengthAdjust="spacingAndGlyphs">1884.70</text>
<text x="497.1" y="359.8" font-family='"Liberation Sans","Noto Sans CJK SC",sans-serif' font-size="12" fill="#3cc886" text-anchor="start" font-weight="bold" textLength="44" lengthAdjust="spacingAndGlyphs">1810.33</text>
<text x="865.8" y="53.4" font-family='"Liberation Sans","Noto Sans CJK SC",sans-serif' font-size="12" fill="#ff3352" text-anchor="start" font-weight="bold" textLength="44" lengthAdjust="spacingAndGlyphs">2144.68</text>
<text x="86.9" y="25.3" font-family='"Liberation Sans","Noto Sans CJK SC",sans-serif' font-size="12" fill="#ff3352" text-anchor="end" font-weight="normal" textLength="44.4" lengthAdjust="spacingAndGlyphs">2184.80</text>
<text x="929.5" y="25.3" font-family='"Liberation Sans","Noto Sans CJK SC",sans-serif' font-size="12" fill="#ff3352" text-anchor="start" font-weight="normal" textLength="44.3" lengthAdjust="spacingAndGlyphs">2184.80</text>
<text x="86.9" y="83.3" font-family='"Liberation Sans","Noto Sans CJK SC",sans-serif' font-size="12" fill="#ff3352" text-anchor="end" font-weight="normal" textLength="44.4" lengthAdjust="spacingAndGlyphs">2118.02</text>
<text x="929.5" y="83.3" font-family='"Liberation Sans","Noto Sans CJK SC",sans-serif' font-size="12" fill="#ff3352" text-anchor="start" font-weight="normal" textLength="44.3" lengthAdjust="spacingAndGlyphs">2118.02</text>
<text x="86.9" y="141.3" font-family='"Liberation Sans","Noto Sans CJK SC",sans-serif' font-size="12" fill="#ff3352" text-anchor="end" font-weight="normal" textLength="44.4" lengthAdjust="spacingAndGlyphs">2051.24</text>
<text x="929.5" y="141.3" font-family='"Liberation Sans","Noto Sans CJK SC",sans-serif' font-size="12" fill="#ff3352" text-anchor="start" font-weight="normal" textLength="44.3" lengthAdjust="spacingAndGlyphs">2051.24</text>
<text x="86.9" y="199.3" font-family='"Liberation Sans","Noto Sans CJK SC",sans-serif' font-size="12" fill="#ff3352" text-anchor="end" font-weight="normal" textLength="44.4" lengthAdjust="spacingAndGlyphs">1984.46</text>
<text x="929.5" y="199.3" font-family='"Liberation Sans","Noto Sans CJK SC",sans-serif' font-size="12" fill="#ff3352" text-anchor="start" font-weight="normal" textLength="44.3" lengthAdjust="spacingAndGlyphs">1984.46</text>
<text x="86.9" y="257.3" font-family='"Liberation Sans","Noto Sans CJK SC",sans-serif' font-size="12" fill="#ff3352" text-anchor="end" font-weight="normal" textLength="44.4" lengthAdjust="spacingAndGlyphs">1917.68</text>
<text x="929.5" y="257.3" font-family='"Liberation Sans","Noto Sans CJK SC",sans-serif' font-size="12" fill="#ff3352" text-anchor="start" font-weight="normal" textLength="44.3" lengthAdjust="spacingAndGlyphs">1917.68</text>
<text x="86.9" y="315.3" font-family='"Liberation Sans","Noto Sans CJK SC",sans-serif' font-size="12" fill="#ff3352" text-anchor="end" font-weight="normal" textLength="44.4" lengthAdjust="spacingAndGlyphs">1850.90</text>
<text x="929.5" y="315.3" font-family='"Liberation Sans","Noto Sans CJK SC",sans-serif' font-size="12" fill="#ff3352" text-anchor="start" font-weight="normal" textLength="44.3" lengthAdjust="spacingAndGlyphs">1850.90</text>
<text x="86.9" y="395.3" font-family='"Liberation Sans","Noto Sans CJK SC",sans-serif' font-size="12" fill="#ff3352" text-anchor="end" font-weight="normal" textLength="37.2" lengthAdjust="spacingAndGlyphs">117.74</text>
<text x="929.8" y="395.3" font-family='"Liberation Sans","Noto Sans CJK SC",sans-serif' font-size="12" fill="#ff3352" text-anchor="start" font-weight="normal" textLength="37.2" lengthAdjust="spacingAndGlyphs">117.74</text>
<text x="86.9" y="420.3" font-family='"Liberation Sans","Noto Sans CJK SC",sans-serif' font-size="12" fill="#ff3352" text-anchor="end" font-weight="normal" textLength="30.4" lengthAdjust="spacingAndGlyphs">91.60</text>
<text x="929.8" y="420.3" font-family='"Liberation Sans","Noto Sans CJK SC",sans-serif' font-size="12" fill="#ff3352" text-anchor="start" font-weight="normal" textLength="30.4" lengthAdjust="spacingAndGlyphs">91.60</text>
<text x="86.9" y="446.3" font-family='"Liberation Sans","Noto Sans CJK SC",sans-serif' font-size="12" fill="#ff3352" text-anchor="end" font-weight="normal" textLength="30.4" lengthAdjust="spacingAndGlyphs">65.46</text>
<text x="929.8" y="446.3" font-family='"Liberation Sans","Noto Sans CJK SC",sans-serif' font-size="12" fill="#ff3352" text-anchor="start" font-weight="normal" textLength="30.4" lengthAdjust="spacingAndGlyphs">65.46</text>
<text x="86.9" y="471.3" font-family='"Liberation Sans","Noto Sans CJK SC",sans-serif' font-size="12" fill="#ff3352" text-anchor="end" font-weight="normal" textLength="30.4" lengthAdjust="spacingAndGlyphs">39.32</text>
<text x="929.8" y="471.3" font-family='"Liberation Sans","Noto Sans CJK SC",sans-serif' font-size="12" fill="#ff3352" text-anchor="start" font-weight="normal" textLength="30.4" lengthAdjust="spacingAndGlyphs">39.32</text>
<text x="86.9" y="497.3" font-family='"Liberation Sans","Noto Sans CJK SC",sans-serif' font-size="12" fill="#ff3352" text-anchor="end" font-weight="normal" textLength="30.4" lengthAdjust="spacingAndGlyphs">13.18</text>
<text x="929.8" y="497.3" font-family='"Liberation Sans","Noto Sans CJK SC",sans-serif' font-size="12" fill="#ff3352" text-anchor="start" font-weight="normal" textLength="30.4" lengthAdjust="spacingAndGlyphs">13.18</text>
<text x="86.9" y="545.3" font-family='"Liberation Sans","Noto Sans CJK SC",sans-serif' font-size="12" fill="#ff3352" text-anchor="end" font-weight="normal" textLength="30.4" lengthAdjust="spacingAndGlyphs">86.60</text>
<text x="929.8" y="545.3" font-family='"Liberation Sans","Noto Sans CJK SC",sans-serif' font-size="12" fill="#ff3352" text-anchor="start" font-weight="normal" textLength="30.4" lengthAdjust="spacingAndGlyphs">86.60</text>
<text x="86.9" y="568.3" font-family='"Liberation Sans","Noto Sans CJK SC",sans-serif' font-size="12" fill="#ff3352" text-anchor="end" font-weight="normal" textLength="30.4" lengthAdjust="spacingAndGlyphs">66.70</text>
<text x="929.8" y="568.3" font-family='"Liberation Sans","Noto Sans CJK SC",sans-serif' font-size="12" fill="#ff3352" text-anchor="start" font-weight="normal" textLength="30.4" lengthAdjust="spacingAndGlyphs">66.70</text>
<text x="86.9" y="591.3" font-family='"Liberation Sans","Noto Sans CJK SC",sans-serif' font-size="12" fill="#ff3352" text-anchor="end" font-weight="normal" textLength="30.4" lengthAdjust="spacingAndGlyphs">46.81</text>
<text x="929.8" y="591.3" font-family='"Liberation Sans","Noto Sans CJK SC",sans-serif' font-size="12" fill="#ff3352" text-anchor="start" font-weight="normal" textLength="30.4" lengthAdjust="spacingAndGlyphs">46.81</text>
<text x="86.9" y="614.3" font-family='"Liberation Sans","Noto Sans CJK SC",sans-serif' font-size="12" fill="#ff3352" text-anchor="end" font-weight="normal" textLength="30.4" lengthAdjust="spacingAndGlyphs">26.91</text>
<text x="929.8" y="614.3" font-family='"Liberation Sans","Noto Sans CJK SC",sans-serif' font-size="12" fill="#ff3352" text-anchor="start" font-weight="normal" textLength="30.4" lengthAdjust="spacingAndGlyphs">26.91</text>
<rect x="926.5" y="197.5" width="68" height="17" fill="#000" stroke="#2a2a2a" stroke-width="1" shape-rendering="crispEdges"/>
<text x="929.6" y="210.3" font-family='"Liberation Sans","Noto Sans CJK SC",sans-serif' font-size="12" fill="#f0a030" text-anchor="start" font-weight="normal" textLength="43.6" lengthAdjust="spacingAndGlyphs">1982.74</text>
<text x="92" y="14" font-family='"Liberation Sans","Noto Sans CJK SC",sans-serif' font-size="12" fill="#f0f0f0" text-anchor="start" font-weight="normal" >现货黄金</text>
<text x="139.6" y="14" font-family='"Liberation Sans","Noto Sans CJK SC",sans-serif' font-size="12" fill="#f0b040" text-anchor="start" font-weight="normal" >【日线】</text>
<g shape-rendering="crispEdges"><rect x="196" y="2" width="12" height="13" fill="#909090"/><rect x="195.5" y="1.5" width="11" height="12" fill="#ffffff" stroke="#00008c" stroke-width="1"/></g>
<polyline points="196,8.8 199.4,4.5 202.5,7.8 204.5,5.5 206,5.5" fill="none" stroke="#ff1010" stroke-width="1.1"/>
<polyline points="196,11.8 199.4,7.5 202.5,10.8 204.5,8.5 206,8.5" fill="none" stroke="#1010ff" stroke-width="1.1"/>
<text x="210.5" y="14" font-family='"Liberation Sans","Noto Sans CJK SC",sans-serif' font-size="12.7" fill="#f0f0f0" text-anchor="start" font-weight="normal" textLength="126.1" lengthAdjust="spacingAndGlyphs">MA(5,9,21,55,100,200)</text>
<text x="341.4" y="14" font-family='"Liberation Sans","Noto Sans CJK SC",sans-serif' font-size="12.7" fill="#f0f0f0" text-anchor="start" font-weight="normal" textLength="74.4" lengthAdjust="spacingAndGlyphs">MA5:2021.12</text>
<text x="424.9" y="14" font-family='"Liberation Sans","Noto Sans CJK SC",sans-serif' font-size="12.7" fill="#d8d820" text-anchor="start" font-weight="normal" textLength="73.8" lengthAdjust="spacingAndGlyphs">MA9:2033.09</text>
<text x="507.7" y="14" font-family='"Liberation Sans","Noto Sans CJK SC",sans-serif' font-size="12.7" fill="#e020e0" text-anchor="start" font-weight="normal" textLength="80.7" lengthAdjust="spacingAndGlyphs">MA21:2001.86</text>
<text x="598.1" y="14" font-family='"Liberation Sans","Noto Sans CJK SC",sans-serif' font-size="12.7" fill="#20d020" text-anchor="start" font-weight="normal" textLength="80.7" lengthAdjust="spacingAndGlyphs">MA55:1952.98</text>
<text x="687.8" y="14" font-family='"Liberation Sans","Noto Sans CJK SC",sans-serif' font-size="12.7" fill="#909090" text-anchor="start" font-weight="normal" textLength="87.4" lengthAdjust="spacingAndGlyphs">MA100:1940.63</text>
<text x="92.5" y="384" font-family='"Liberation Sans","Noto Sans CJK SC",sans-serif' font-size="12.7" fill="#f0f0f0" text-anchor="start" font-weight="normal" textLength="56.4" lengthAdjust="spacingAndGlyphs">KDJ(9,3,3)</text>
<text x="154.3" y="384" font-family='"Liberation Sans","Noto Sans CJK SC",sans-serif' font-size="12.7" fill="#f0f0f0" text-anchor="start" font-weight="normal" textLength="40.7" lengthAdjust="spacingAndGlyphs">K:25.19</text>
<text x="203.4" y="384" font-family='"Liberation Sans","Noto Sans CJK SC",sans-serif' font-size="12.7" fill="#d8d820" text-anchor="start" font-weight="normal" textLength="42.7" lengthAdjust="spacingAndGlyphs">D:43.49</text>
<text x="255.2" y="384" font-family='"Liberation Sans","Noto Sans CJK SC",sans-serif' font-size="12.7" fill="#e020e0" text-anchor="start" font-weight="normal" textLength="42.1" lengthAdjust="spacingAndGlyphs">J:-11.41</text>
<text x="92.6" y="534" font-family='"Liberation Sans","Noto Sans CJK SC",sans-serif' font-size="12.7" fill="#f0f0f0" text-anchor="start" font-weight="normal" textLength="66.7" lengthAdjust="spacingAndGlyphs">RSI(6,12,24)</text>
<text x="164.3" y="534" font-family='"Liberation Sans","Noto Sans CJK SC",sans-serif' font-size="12.7" fill="#f0f0f0" text-anchor="start" font-weight="normal" textLength="59.7" lengthAdjust="spacingAndGlyphs">RSI1:39.76</text>
<text x="233" y="534" font-family='"Liberation Sans","Noto Sans CJK SC",sans-serif' font-size="12.7" fill="#d8d820" text-anchor="start" font-weight="normal" textLength="58.5" lengthAdjust="spacingAndGlyphs">RSI2:49.73</text>
<text x="300.5" y="534" font-family='"Liberation Sans","Noto Sans CJK SC",sans-serif' font-size="12.7" fill="#e020e0" text-anchor="start" font-weight="normal" textLength="59.6" lengthAdjust="spacingAndGlyphs">RSI3:54.08</text>
<rect x="863.5" y="1.5" width="13" height="13" fill="none" stroke="#9a9a9a" stroke-width="1" shape-rendering="crispEdges"/>
<rect x="879.5" y="1.5" width="13" height="13" fill="none" stroke="#9a9a9a" stroke-width="1" shape-rendering="crispEdges"/>
<rect x="895.5" y="1.5" width="13" height="13" fill="none" stroke="#9a9a9a" stroke-width="1" shape-rendering="crispEdges"/>
<rect x="911.5" y="1.5" width="13" height="13" fill="none" stroke="#9a9a9a" stroke-width="1" shape-rendering="crispEdges"/>
<rect x="869" y="3" width="2" height="1" fill="#9c9c9c" shape-rendering="crispEdges"/>
<rect x="869" y="5" width="2" height="1" fill="#9c9c9c" shape-rendering="crispEdges"/>
<rect x="869" y="10" width="2" height="1" fill="#9c9c9c" shape-rendering="crispEdges"/>
<rect x="869" y="12" width="2" height="1" fill="#9c9c9c" shape-rendering="crispEdges"/>
<rect x="865" y="7" width="1" height="2" fill="#9c9c9c" shape-rendering="crispEdges"/>
<rect x="867" y="7" width="1" height="2" fill="#9c9c9c" shape-rendering="crispEdges"/>
<rect x="872" y="7" width="1" height="2" fill="#9c9c9c" shape-rendering="crispEdges"/>
<rect x="874" y="7" width="1" height="2" fill="#9c9c9c" shape-rendering="crispEdges"/>
<rect x="869" y="4" width="2" height="1" fill="#666" shape-rendering="crispEdges"/><rect x="869" y="11" width="2" height="1" fill="#666" shape-rendering="crispEdges"/><rect x="866" y="7" width="1" height="2" fill="#666" shape-rendering="crispEdges"/><rect x="873" y="7" width="1" height="2" fill="#666" shape-rendering="crispEdges"/>
<path d="M882.5 3.5 V12 M881.5 11.5 H890.5" stroke="#9c9c9c" fill="none" stroke-width="1" shape-rendering="crispEdges"/>
<path d="M881 5 L882.5 3 L884 5 Z M889 10 L891 11.5 L889 13 Z M881 10.5 L882.5 12.5 L884 10.5Z" fill="#9c9c9c"/>
<rect x="885" y="4" width="1" height="6" fill="#9c9c9c" shape-rendering="crispEdges"/><path d="M890 4 L886.5 7 L890 10 Z" fill="#9c9c9c"/>
<path d="M898.5 3.5 V12 M897.5 11.5 H906.5" stroke="#9c9c9c" fill="none" stroke-width="1" shape-rendering="crispEdges"/>
<path d="M897 5 L898.5 3 L900 5 Z M905 10 L907 11.5 L905 13 Z M897 10.5 L898.5 12.5 L900 10.5Z" fill="#9c9c9c"/>
<path d="M901 3.5 L906.5 7 L901 10.5 Z" fill="#9c9c9c"/>
<rect x="913.5" y="3.5" width="3" height="9" fill="none" stroke="#9c9c9c" shape-rendering="crispEdges"/><path d="M916 8 H921" stroke="#9c9c9c" stroke-width="2" shape-rendering="crispEdges"/><path d="M919.5 5 L923 8 L919.5 11 Z" fill="#9c9c9c"/>
<circle cx="29.1" cy="527.1" r="4.3" fill="#000"/><circle cx="29.1" cy="527.1" r="3.2" fill="#fff"/><circle cx="29" cy="527.1" r="1.8" fill="#ff0000"/>
<g fill="#ff0000" shape-rendering="crispEdges">
<rect x="28" y="520" width="1" height="2"/>
<rect x="28" y="532" width="1" height="2"/>
<rect x="22" y="526" width="2" height="1"/>
<rect x="34" y="526" width="2" height="1"/>
<rect x="23" y="521" width="1" height="1"/>
<rect x="24" y="522" width="1" height="1"/>
<rect x="33" y="522" width="1" height="1"/>
<rect x="34" y="521" width="1" height="1"/>
<rect x="24" y="531" width="1" height="1"/>
<rect x="23" y="532" width="1" height="1"/>
<rect x="33" y="531" width="1" height="1"/>
<rect x="34" y="532" width="1" height="1"/>
</g>
<text x="268.3" y="646" font-family='"Liberation Sans","Noto Sans CJK SC",sans-serif' font-size="12" fill="#b4c0cc" text-anchor="start" font-weight="bold" textLength="43.6" lengthAdjust="spacingAndGlyphs">2023/09</text>
<text x="458.2" y="646" font-family='"Liberation Sans","Noto Sans CJK SC",sans-serif' font-size="12" fill="#b4c0cc" text-anchor="start" font-weight="bold" textLength="43.6" lengthAdjust="spacingAndGlyphs">2023/10</text>
<text x="656" y="646" font-family='"Liberation Sans","Noto Sans CJK SC",sans-serif' font-size="12" fill="#b4c0cc" text-anchor="start" font-weight="bold" textLength="43.6" lengthAdjust="spacingAndGlyphs">2023/11</text>
<text x="853.3" y="646" font-family='"Liberation Sans","Noto Sans CJK SC",sans-serif' font-size="12" fill="#b4c0cc" text-anchor="start" font-weight="bold" textLength="43.6" lengthAdjust="spacingAndGlyphs">2023/12</text>
<rect x="725.5" y="633.5" width="110" height="16" fill="#000" stroke="#343434" stroke-width="1" shape-rendering="crispEdges"/>
<text x="727.7" y="647" font-family='"Liberation Sans","Noto Sans CJK SC",sans-serif' font-size="13" fill="#f0a040" text-anchor="start" font-weight="normal" textLength="64.5" lengthAdjust="spacingAndGlyphs">2023/11/29</text>
<text x="797.6" y="646.6" font-family='"Liberation Sans","Noto Sans CJK SC",sans-serif' font-size="12" fill="#f0a040" text-anchor="start" font-weight="normal" >星期三</text>
<text x="34.6" y="649.3" font-family='"Liberation Sans","Noto Sans CJK SC",sans-serif' font-size="12" fill="#f4c050" text-anchor="start" font-weight="bold" >日线</text>
<path d="M64.8 648.3 L69 639.6 L73.3 648.3 Z" fill="#f4c050"/>
<rect x="20" y="651" width="71" height="1" fill="#2c2c2c" shape-rendering="crispEdges"/>
<rect x="20" y="653" width="976" height="16" fill="#0b0b0b"/>
<rect x="20" y="653" width="976" height="1" fill="#1e1e1e"/><rect x="20" y="668" width="976" height="1" fill="#161616"/>
<rect x="60" y="653" width="39" height="16" fill="#474a5a"/>
<rect x="278" y="653" width="64" height="16" fill="#3e404c"/>
<rect x="59" y="653" width="1" height="16" fill="#2c2c2c"/>
<rect x="99" y="653" width="1" height="16" fill="#2c2c2c"/>
<rect x="157" y="653" width="1" height="16" fill="#2c2c2c"/>
<rect x="197" y="653" width="1" height="16" fill="#2c2c2c"/>
<rect x="237" y="653" width="1" height="16" fill="#2c2c2c"/>
<rect x="278" y="653" width="1" height="16" fill="#2c2c2c"/>
<rect x="342" y="653" width="1" height="16" fill="#2c2c2c"/>
<rect x="405" y="653" width="1" height="16" fill="#2c2c2c"/>
<text x="40" y="665.2" font-family='"Liberation Mono","Noto Serif CJK SC","Noto Sans CJK SC",serif' font-size="12" fill="#c8c8c8" text-anchor="middle" font-weight="normal" >指标</text>
<text x="79.5" y="665.2" font-family='"Liberation Mono","Noto Serif CJK SC","Noto Sans CJK SC",serif' font-size="12" fill="#ffffff" text-anchor="middle" font-weight="normal" >模板</text>
<text x="108.5" y="665.2" font-family='"Liberation Mono","Noto Serif CJK SC","Noto Sans CJK SC",serif' font-size="12" fill="#f0c040" text-anchor="start" font-weight="normal" textLength="17.5" lengthAdjust="spacingAndGlyphs">VIP</text>
<text x="126.2" y="665.2" font-family='"Liberation Mono","Noto Serif CJK SC","Noto Sans CJK SC",serif' font-size="12" fill="#f0c040" text-anchor="start" font-weight="normal" >指标</text>
<text x="177.5" y="665.2" font-family='"Liberation Mono","Noto Serif CJK SC","Noto Sans CJK SC",serif' font-size="12" fill="#c8c8c8" text-anchor="middle" font-weight="normal" >标准</text>
<text x="217.5" y="665.2" font-family='"Liberation Mono","Noto Serif CJK SC","Noto Sans CJK SC",serif' font-size="12" fill="#c8c8c8" text-anchor="middle" font-weight="normal" textLength="23.5" lengthAdjust="spacingAndGlyphs">MACD</text>
<text x="258" y="665.2" font-family='"Liberation Mono","Noto Serif CJK SC","Noto Sans CJK SC",serif' font-size="12" fill="#c8c8c8" text-anchor="middle" font-weight="normal" textLength="23.5" lengthAdjust="spacingAndGlyphs">BOLL</text>
<text x="310" y="665.2" font-family='"Liberation Mono","Noto Serif CJK SC","Noto Sans CJK SC",serif' font-size="12" fill="#ffffff" text-anchor="middle" font-weight="normal" >另存模板</text>
<text x="374" y="665.2" font-family='"Liberation Mono","Noto Serif CJK SC","Noto Sans CJK SC",serif' font-size="12" fill="#e8e8e8" text-anchor="middle" font-weight="normal" >管理模板</text>
</svg></body></html>
